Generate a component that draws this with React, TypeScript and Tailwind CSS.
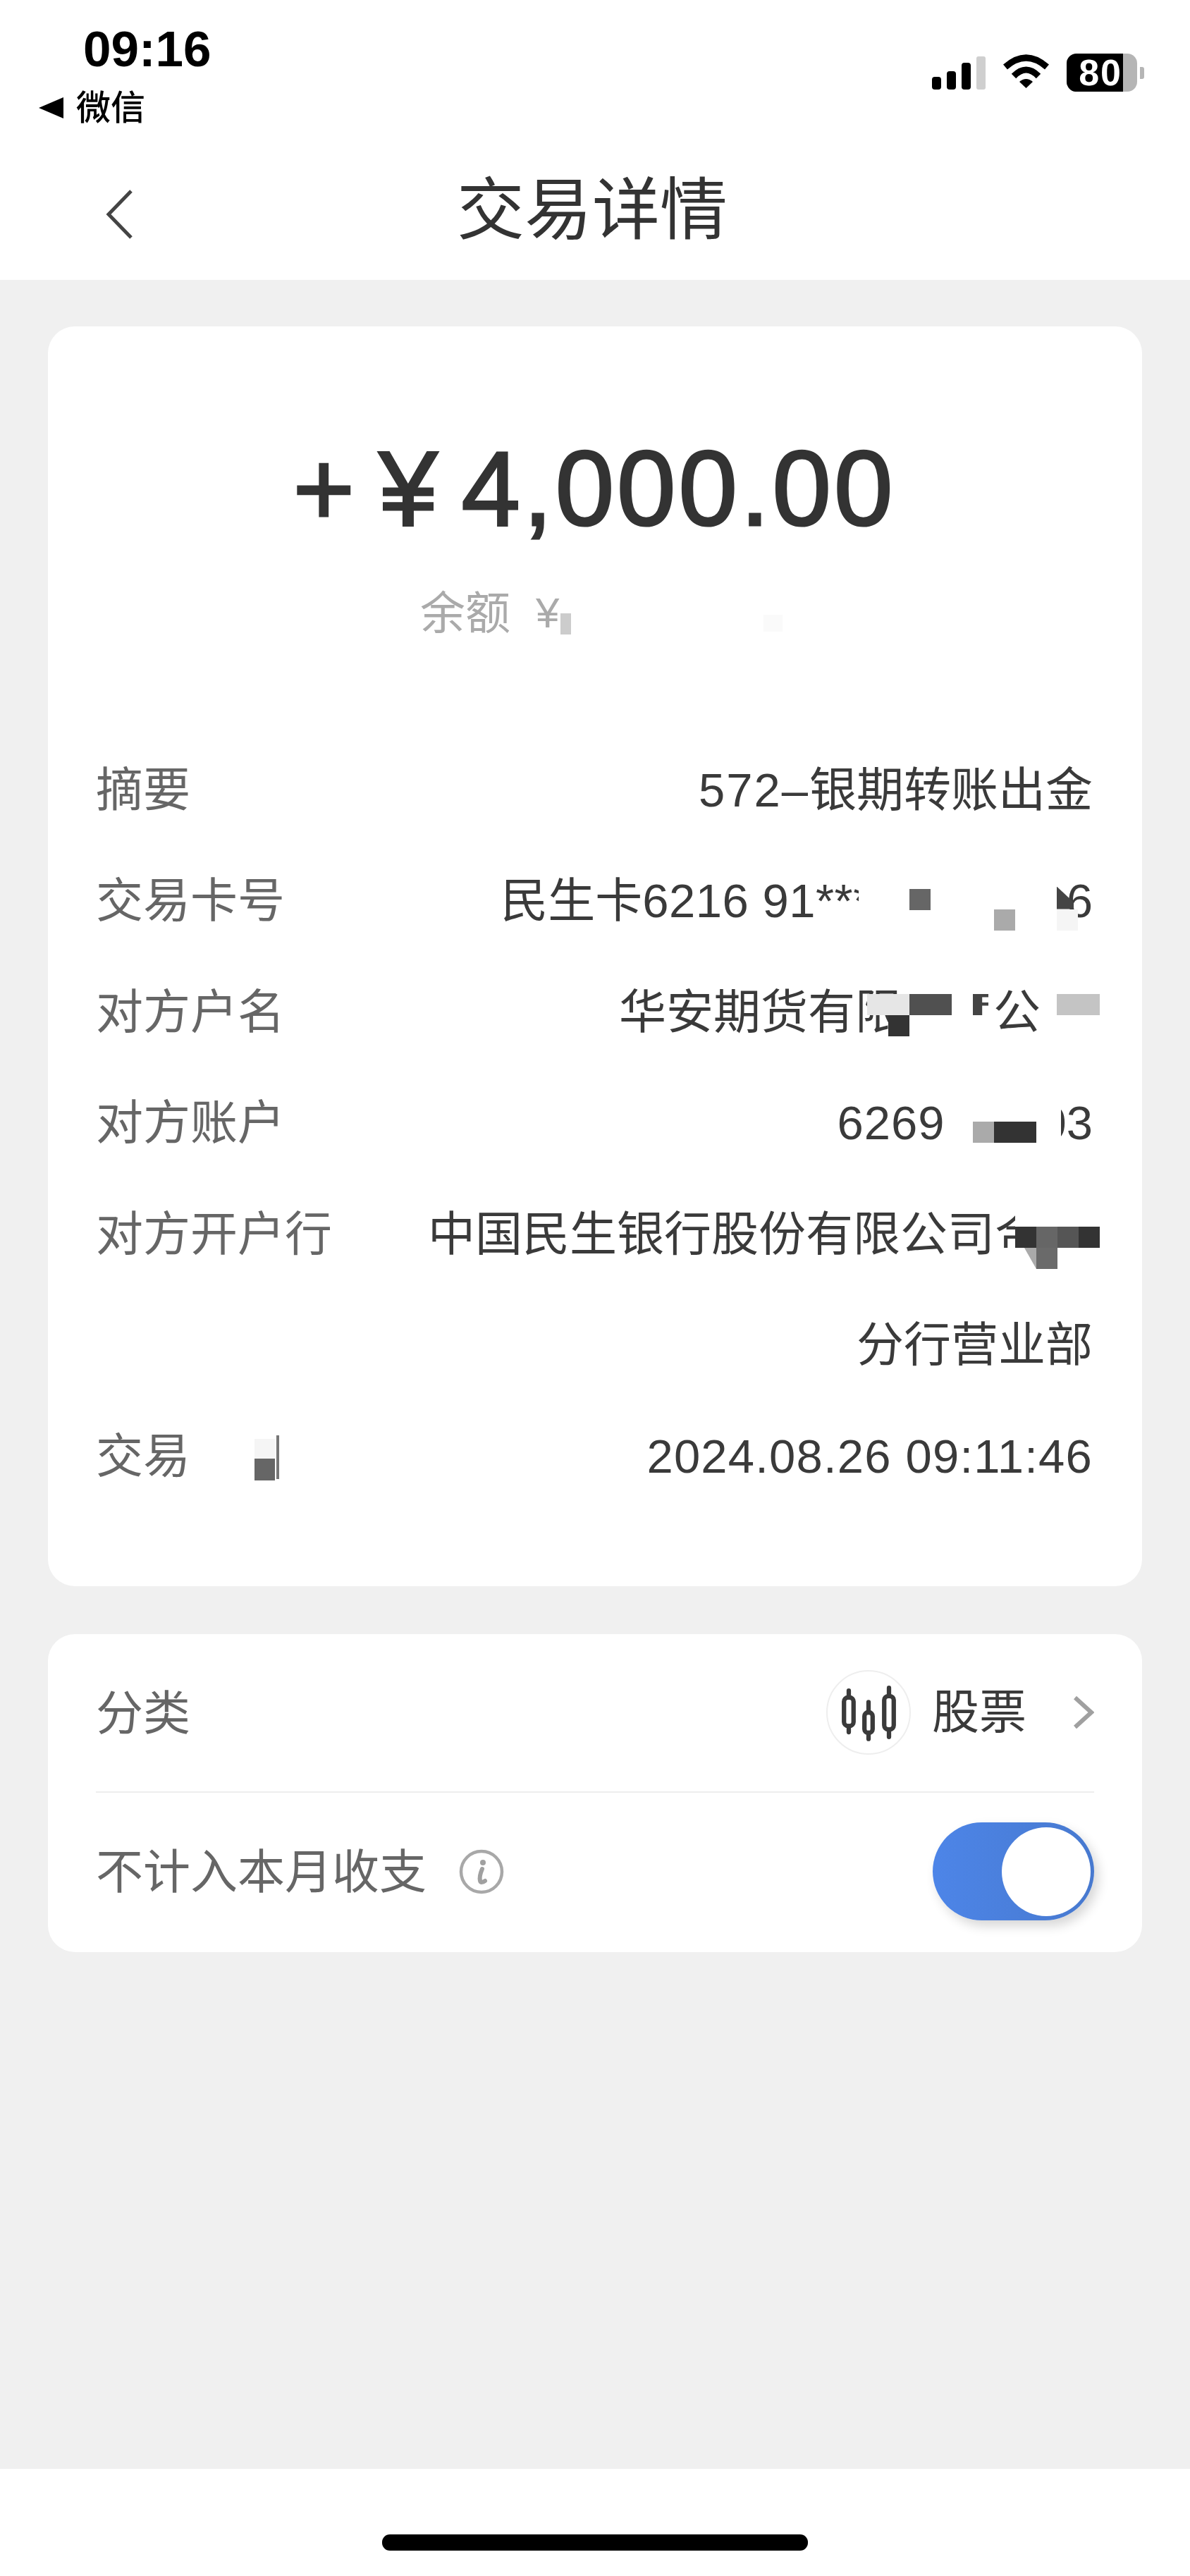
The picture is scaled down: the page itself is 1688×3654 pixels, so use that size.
import React from "react";

function Row({ label, children, blocks }: { label?: React.ReactNode; children?: React.ReactNode; blocks?: React.ReactNode }) {
  return (
    <div className="relative flex h-[157.5px] items-center justify-between text-[67px] leading-[80px]">
      <span className="pt-[4px] text-[#666666]">{label}</span>
      <span className="flex items-center pr-[2px] pt-[4px] text-[#3a3a3a]">{children}</span>
      {blocks}
    </div>
  );
}

function Wifi() {
  return (
    <svg viewBox="0 0 67 49" className="h-[49px] w-[67px]">
      <path d="M4 19 Q33.5 -7 63 19" fill="none" stroke="#000" strokeWidth="9" />
      <path d="M16 32 Q33.5 14 51 32" fill="none" stroke="#000" strokeWidth="9" />
      <path d="M24 40 Q33.5 32 43 40 L33.5 49 Z" fill="#000" />
    </svg>
  );
}

function Candles() {
  return (
    <svg viewBox="0 0 120 120" className="h-[120px] w-[120px] rounded-full border-2 border-[#eeeeee]">
      <g fill="none" stroke="#3a3a3a" strokeWidth="6.5" strokeLinecap="round">
        <path d="M31 28V38M31 80V89M60 45V60M60 90V99M90 24V36M90 85V96" />
        <rect x="24" y="38" width="14" height="42" rx="6" />
        <rect x="54" y="60" width="12" height="30" rx="5.5" />
        <rect x="83" y="36" width="14" height="49" rx="6" />
      </g>
    </svg>
  );
}

function Info() {
  return (
    <svg viewBox="0 0 64 64" className="h-[64px] w-[64px]">
      <circle cx="32" cy="32" r="29" fill="none" stroke="#a8a8a8" strokeWidth="4.5" />
      <circle cx="34" cy="19" r="4" fill="#a0a0a0" />
      <path d="M33 28 C30 35 29 41 30 45 C31 48 34 47 37 45" fill="none" stroke="#a0a0a0" strokeWidth="6" strokeLinecap="round" />
    </svg>
  );
}

export default function App() {
  return (
    <div className="flex h-[3654px] w-[1688px] flex-col bg-white font-['Liberation_Sans','Noto_Sans_CJK_SC',sans-serif]">
      <header className="flex h-[397px] flex-col">
        <div className="flex h-[200px] justify-between">
          <div className="flex flex-col pl-[55px] pt-[30px] text-black">
            <span className="pl-[63px] text-[71px] font-bold leading-[80px]">09:16</span>
            <span className="mt-[15px] flex items-center gap-[18px] text-[49px] font-medium leading-[56px]">
              <svg viewBox="0 0 35 30" className="h-[30px] w-[35px]"><path d="M0 15 L35 0 V30 Z" fill="#000" /></svg>
              微信
            </span>
          </div>
          <div className="flex items-start gap-[24px] pr-[65px] pt-[76px]">
            <div className="flex h-[51px] items-end gap-[8px] pb-0">
              <span className="h-[18px] w-[13px] rounded-[4px] bg-black" />
              <span className="h-[26px] w-[13px] rounded-[4px] bg-black" />
              <span className="h-[38px] w-[13px] rounded-[4px] bg-black" />
              <span className="h-[47px] w-[13px] rounded-[3px] bg-[#cfcfcf]" />
            </div>
            <Wifi />
            <div className="flex items-center">
              <div className="flex h-[54px] w-[100px] rounded-[14px] bg-[#b5b5b5]">
                <span className="flex h-full w-[80px] items-center justify-end rounded-l-[14px] bg-black pr-[1px] text-[52px] font-bold leading-[54px] tracking-[2px] text-white">80</span>
              </div>
              <span className="ml-[4px] h-[17px] w-[6px] rounded-r-[3px] bg-[#b5b5b5]" />
            </div>
          </div>
        </div>
        <div className="relative flex h-[197px] items-start justify-center">
          <span className="mr-[8px] mt-[38px] text-[96px] leading-[120px] text-[#333333]">交易详情</span>
          <svg viewBox="0 0 40 70" className="absolute left-[150px] top-[69px] h-[70px] w-[40px]">
            <path d="M36 2 L4 35 L36 68" fill="none" stroke="#444444" strokeWidth="5" />
          </svg>
        </div>
      </header>

      <main className="flex flex-1 flex-col gap-[68px] bg-[#f0f0f0] px-[68px] pt-[66px]">
        <section className="rounded-[38px] bg-white px-[68px] pb-[107px] pt-[150px]">
          <div className="flex h-[160px] items-center justify-center gap-[34px] pr-[2px] text-[150px] leading-[160px] text-[#333333] [-webkit-text-stroke:3px_#333333]">
            <span>+</span>
            <span>¥</span>
            <span className="tracking-[4px]">4,000.00</span>
          </div>
          <div className="relative ml-[460px] mt-[63px] flex h-[64px] items-center gap-[36px] pt-[3px] text-[64px] leading-[64px] text-[#aaaaaa]">
            <span>余额</span>
            <span className="text-[60px]">¥</span>
            <span className="absolute left-[199px] top-[34px] h-[30px] w-[15px] bg-[#cccccc]" />
            <span className="absolute left-[487px] top-[36px] h-[24px] w-[27px] bg-[#fafafa]" />
          </div>
          <div className="mt-[140px]">
            <Row label="摘要"><span className="tracking-[2px]">572–</span>银期转账出金</Row>
            <Row
              label="交易卡号"
              blocks={
                <>
                  <span className="absolute left-[1082px] top-[50px] h-[40px] w-[20px] bg-white" />
                  <span className="absolute left-[1154px] top-[63px] h-[30px] w-[30px] bg-[#666666]" />
                  <span className="absolute left-[1274px] top-[92px] h-[30px] w-[30px] bg-[#aaaaaa]" />
                  <span className="absolute left-[1363px] top-[60px] h-[32px] w-[24px] bg-[#444444] [clip-path:polygon(0_0,100%_70%,100%_100%,0_100%)]" />
                  <span className="absolute left-[1363px] top-[92px] h-[30px] w-[30px] bg-[#f5f5f5]" />
                </>
              }
            >
              民生卡<span className="tracking-[0.5px]">6216 91***</span>
              <span className="w-[276px]" />
              6
            </Row>
            <Row
              label="对方户名"
              blocks={
                <>
                  <span className="absolute left-[1094px] top-[55px] h-[30px] w-[60px] bg-[#e6e6e6]" />
                  <span className="absolute left-[1154px] top-[55px] h-[30px] w-[60px] bg-[#505050]" />
                  <span className="absolute left-[1124px] top-[85px] h-[30px] w-[30px] bg-[#333333]" />
                  <span className="absolute left-[1154px] top-[85px] h-[30px] w-[10px] bg-white" />
                  <span className="absolute left-[1244px] top-[55px] h-[30px] w-[22px] bg-[#444444] [clip-path:polygon(0_0,100%_0,100%_15%,60%_15%,60%_40%,100%_40%,100%_55%,60%_55%,60%_100%,0_100%)]" />
                  <span className="absolute left-[1363px] top-[55px] h-[30px] w-[61px] bg-[#c4c4c4]" />
                </>
              }
            >
              华安期货有限
              <span className="w-[129px]" />
              公
              <span className="w-[74px]" />
            </Row>
            <Row
              label="对方账户"
              blocks={
                <>
                  <span className="absolute left-[1244px] top-[78px] h-[30px] w-[30px] bg-[#aaaaaa]" />
                  <span className="absolute left-[1274px] top-[78px] h-[30px] w-[60px] bg-[#333333]" />
                  <span className="absolute left-[1339px] top-[40px] h-[80px] w-[30px] bg-white" />
                </>
              }
            >
              <span className="tracking-[1px]">6269</span>
              <span className="w-[135px]" />
              03
            </Row>
            <Row
              label="对方开户行"
              blocks={
                <>
                  <span className="absolute left-[1304px] top-[38px] h-[32px] w-[40px] bg-white" />
                  <span className="absolute left-[1276px] top-[100px] h-[30px] w-[58px] bg-white" />
                  <span className="absolute left-[1304px] top-[70px] h-[30px] w-[30px] bg-[#333333]" />
                  <span className="absolute left-[1334px] top-[70px] h-[30px] w-[30px] bg-[#666666]" />
                  <span className="absolute left-[1364px] top-[70px] h-[30px] w-[30px] bg-[#555555]" />
                  <span className="absolute left-[1394px] top-[70px] h-[30px] w-[30px] bg-[#333333]" />
                  <span className="absolute left-[1334px] top-[100px] h-[30px] w-[30px] bg-[#6a6a6a]" />
                  <span className="absolute left-[1317px] top-[100px] h-[30px] w-[17px] bg-[#aaaaaa] [clip-path:polygon(0_0,100%_0,100%_100%)]" />
                </>
              }
            >
              中国民生银行股份有限公司合
              <span className="w-[72px]" />
            </Row>
            <Row>分行营业部</Row>
            <Row
              label="交易"
              blocks={
                <>
                  <span className="absolute left-[225px] top-[56px] h-[28px] w-[29px] bg-[#f5f5f5]" />
                  <span className="absolute left-[225px] top-[84px] h-[31px] w-[29px] bg-[#666666]" />
                  <span className="absolute left-[256px] top-[51px] h-[62px] w-[4px] bg-[#777777]" />
                </>
              }
            >
              <span className="tracking-[1.2px]">2024.08.26 09:11:46</span>
            </Row>
          </div>
        </section>

        <section className="h-[451px] rounded-[38px] bg-white px-[68px]">
          <div className="flex h-[225px] items-center justify-between border-b-2 border-[#eeeeee] text-[67px]">
            <span className="pt-[4px] text-[#666666]">分类</span>
            <div className="flex items-center">
              <Candles />
              <span className="ml-[30px] text-[#3a3a3a]">股票</span>
              <svg viewBox="0 0 30 46" className="ml-[66px] h-[46px] w-[30px]">
                <path d="M3 2 L26 23 L3 44" fill="none" stroke="#a0a0a0" strokeWidth="6" />
              </svg>
            </div>
          </div>
          <div className="flex h-[224px] items-center justify-between text-[67px]">
            <div className="flex items-center gap-[46px] text-[#666666]">
              <span className="pt-[4px]">不计入本月收支</span>
              <Info />
            </div>
            <div className="flex h-[139px] w-[229px] items-center justify-end rounded-full bg-linear-to-r from-[#4d85e8] to-[#4779cf] pr-[5px] shadow-[6px_8px_16px_rgba(0,0,0,0.16)]">
              <span className="h-[126px] w-[126px] rounded-full bg-white" />
            </div>
          </div>
        </section>
      </main>

      <footer className="flex h-[152px] justify-center bg-white pt-[93px]">
        <span className="h-[23px] w-[604px] rounded-[11px] bg-black" />
      </footer>
    </div>
  );
}
